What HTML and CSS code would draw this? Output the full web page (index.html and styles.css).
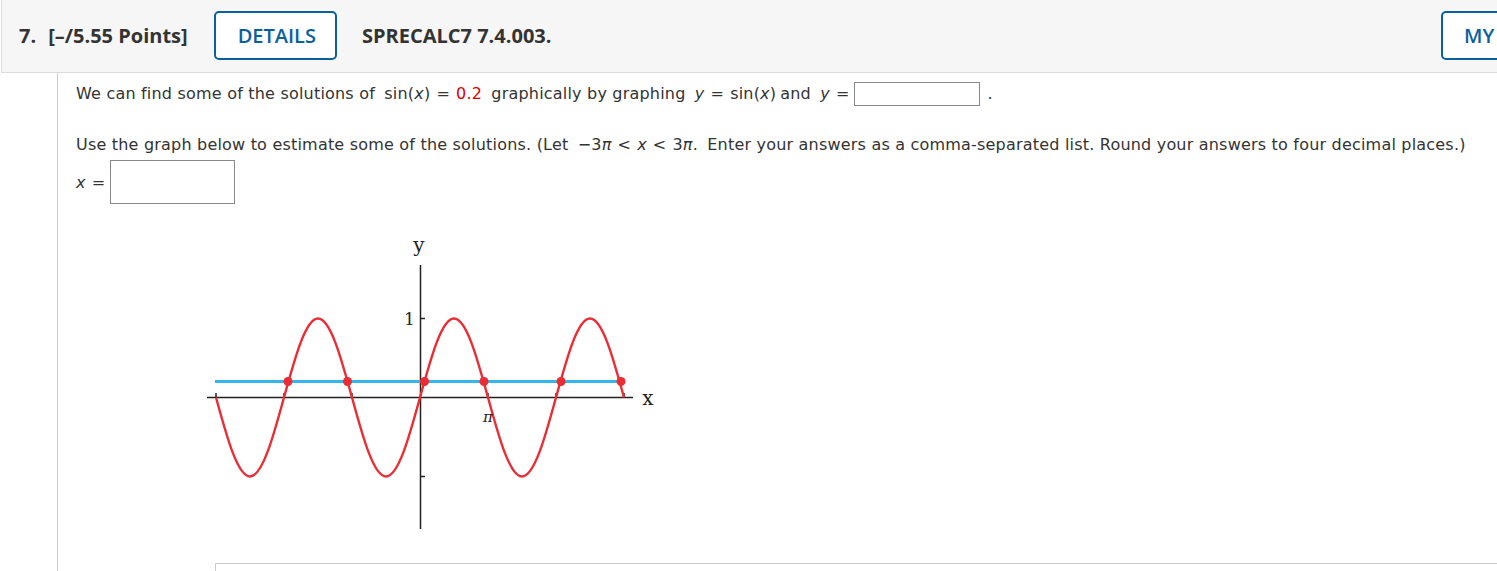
FILE: index.html
```html
<!DOCTYPE html>
<html lang="en">
<head>
<meta charset="utf-8">
<title>SPRECALC7 7.4.003</title>
<link rel="stylesheet" href="styles.css">
</head>
<body>
<div class="header">
  <span class="qnum">7.</span>
  <span class="pts">[–/5.55 Points]</span>
  <span class="btn btn-details">DETAILS</span>
  <span class="code">SPRECALC7 7.4.003.</span>
  <span class="btn btn-my">MY NOTES</span>
</div>
<div class="main">
  <p class="line line1">We can find some of the solutions of <span class="m">sin(<i>x</i>)<span class="op">=</span><span class="red">0.2</span></span> graphically by graphing <span class="m"><i>y</i><span class="op">=</span>sin(<i>x</i>)</span>and <span class="m m-last"><i>y</i><span class="op">=</span></span><span class="inp inp-short"></span><span class="dot">.</span></p>
  <p class="line line2">Use the graph below to estimate some of the solutions. (Let <span class="m">−3<i class="pi">π</i><span class="op">&lt;</span><i>x</i><span class="op">&lt;</span>3<i class="pi">π</i>.</span> Enter your answers as a comma-separated list. Round your answers to four decimal places.)</p>
  <div class="answer"><span class="m"><i>x</i><span class="op">=</span></span><span class="inp inp-tall"></span></div>
  <div class="graph">
    <svg width="460" height="300" viewBox="200 232 460 300" xmlns="http://www.w3.org/2000/svg">
      <g stroke="#222" stroke-width="1.5" fill="none">
        <line x1="207" y1="397.5" x2="633" y2="397.5"/>
        <line x1="420.5" y1="265" x2="420.5" y2="529"/>
        <line x1="420.5" y1="318.5" x2="425" y2="318.5"/>
        <line x1="420.5" y1="476.5" x2="425" y2="476.5"/>
        <line x1="216" y1="393" x2="216" y2="397.5"/>
        <line x1="284" y1="393" x2="284" y2="397.5"/>
        <line x1="352" y1="393" x2="352" y2="397.5"/>
        <line x1="488" y1="393" x2="488" y2="397.5"/>
        <line x1="556" y1="393" x2="556" y2="397.5"/>
        <line x1="624" y1="393" x2="624" y2="397.5"/>
      </g>
      <line x1="215" y1="381.5" x2="624" y2="381.5" stroke="#33b7ea" stroke-width="3"/>
      <path d="M216,397.5 c11.09,40.47 21.7,79 34,79 c12.3,0 22.91,-38.53 34,-79 c11.09,-40.47 21.7,-79 34,-79 c12.3,0 22.91,38.53 34,79 c11.09,40.47 21.7,79 34,79 c12.3,0 22.91,-38.53 34,-79 c11.09,-40.47 21.7,-79 34,-79 c12.3,0 22.91,38.53 34,79 c11.09,40.47 21.7,79 34,79 c12.3,0 22.91,-38.53 34,-79 c11.09,-40.47 21.7,-79 34,-79 c12.3,0 22.91,38.53 34,79" fill="none" stroke="#ec2c34" stroke-width="2.4"/>
      <g fill="#ec2c34">
        <circle cx="288" cy="381.5" r="4.5"/>
        <circle cx="347.5" cy="381.5" r="4.5"/>
        <circle cx="424.5" cy="381.5" r="4.5"/>
        <circle cx="484" cy="381.5" r="4.5"/>
        <circle cx="561" cy="381.5" r="4.5"/>
        <circle cx="621" cy="381.5" r="4.5"/>
      </g>
      <g class="lbl" fill="#222">
        <text x="419" y="252" text-anchor="middle" font-size="20">y</text>
        <text x="648" y="405" text-anchor="middle" font-size="20">x</text>
        <text x="415" y="325" text-anchor="end" font-size="17">1</text>
        <text x="488" y="422" text-anchor="middle" font-size="15" font-style="italic">π</text>
      </g>
    </svg>
  </div>
  <div class="next"></div>
</div>
</body>
</html>
```

FILE: styles.css
```css
html, body {
  margin: 0;
  padding: 0;
  overflow: hidden;
  background: #fff;
}
body {
  font-family: "DejaVu Sans", Verdana, sans-serif;
  color: #333;
  width: 1497px;
  height: 571px;
}
.header {
  margin-left: 1px;
  width: 1590px;
  box-sizing: border-box;
  height: 73px;
  background: #f6f6f6;
  border-left: 1px solid #ddd;
  border-bottom: 1px solid #ddd;
  display: flex;
  align-items: center;
  padding: 0 20px 1px 17px;
  font-family: "Open Sans", "Noto Sans", sans-serif;
  font-size: 20px;
  color: #333;
}
.qnum, .pts, .code {
  font-weight: 700;
  white-space: nowrap;
}
.pts {
  margin-left: 12px;
}
.btn {
  box-sizing: border-box;
  height: 49px;
  display: inline-flex;
  align-items: center;
  padding: 0 19px 0 22px;
  border: 2px solid #0a609c;
  border-radius: 5px;
  background: #fff;
  color: #0a609c;
  font-weight: 600;
  white-space: nowrap;
}
.btn-details {
  margin-left: 26px;
}
.code {
  margin-left: 25px;
}
.btn-my {
  margin-left: auto;
  width: 130px;
  padding-left: 21px;
}
.main {
  margin-left: 57px;
  border-left: 1px solid #ccc;
  padding: 9px 0 0 18px;
  height: 498px;
  box-sizing: border-box;
  font-size: 16px;
  letter-spacing: 0.2px;
}
.line {
  margin: 0;
  line-height: 24px;
  white-space: nowrap;
}
.line2 {
  margin-top: 27px;
}
.m {
  margin: 0 4px;
}
.m i {
  font-style: italic;
}
.op {
  margin: 0 6px;
}
.m-last .op {
  margin-right: 0;
}
.red {
  color: #e00000;
}
.inp {
  display: inline-block;
  box-sizing: border-box;
  border: 1px solid #888;
  background: #fff;
  vertical-align: top;
}
.inp-short {
  width: 126px;
  height: 24px;
}
.dot {
  margin-left: 8px;
}
.answer {
  margin-top: 3px;
  display: flex;
  align-items: center;
  height: 44px;
}
.answer .m {
  margin: 0;
}
.answer .op {
  margin-right: 5px;
}
.inp-tall {
  width: 125px;
  height: 44px;
}
.graph {
  margin: 28px 0 0 124px;
  height: 300px;
}
.graph svg {
  display: block;
}
.lbl text {
  font-family: "DejaVu Serif", "Liberation Serif", serif;
}
.next {
  margin: 31px 0 0 139px;
  height: 20px;
  border-top: 1px solid #ccc;
  border-left: 1px solid #ccc;
}
```
